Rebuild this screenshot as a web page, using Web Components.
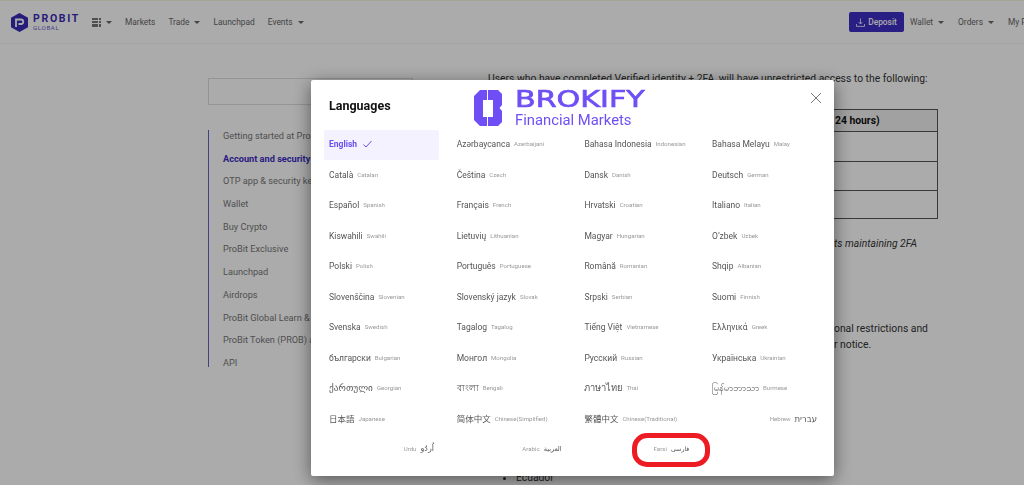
<!DOCTYPE html>
<html>
<head>
<meta charset="utf-8">
<title>Languages</title>
<style>
  html, body { margin: 0; height: 485px; overflow: hidden; background: #fff; }
  body { font-family: Roboto, "Liberation Sans", sans-serif; color: #222; }
</style>
</head>
<body>
<app-nav></app-nav>
<help-page></help-page>
<lang-modal></lang-modal>

<script>
// top bar
class AppNav extends HTMLElement {
  constructor() {
    super();
    this.attachShadow({mode: 'open'});
    this.shadowRoot.innerHTML = `
      <style>
        :host { display: flex; align-items: center; height: 44px; box-sizing: border-box; border-top: 1px solid #f8f8e0; border-bottom: 1px solid #f2f2f2; padding-left: 11px; font-size: 8.4px; color: #666; white-space: nowrap; overflow: hidden; }
        .brand { display: flex; align-items: center; gap: 5px; width: 81px; }
        .word { display: flex; flex-direction: column; padding-top: 1px; }
        .word b { font-size: 10.5px; line-height: 11px; letter-spacing: 1.7px; color: #3a2bb5; font-weight: 700; }
        .word span { font-size: 6.2px; line-height: 8px; letter-spacing: .6px; color: #6a5cc8; }
        .grid { width: 9px; height: 9px; display: grid; grid-template-columns: repeat(3, 2.5px); grid-auto-rows: 2.5px; gap: .75px; }
        .grid i { background: #777; }
        .car { display: inline-block; border: 3px solid transparent; border-top: 3.5px solid #666; border-bottom: 0; margin-left: 5px; vertical-align: 1px; }
        .item { margin-left: 13px; }
        .apps { display: flex; align-items: center; }
        .right { margin-left: auto; display: flex; align-items: center; width: 175px; flex: none; }
        .deposit { width: 55px; height: 20px; background: #3d2ec4; border-radius: 2px; color: #fff; font-weight: 500; display: flex; align-items: center; justify-content: center; gap: 3px; margin-right: 6px; flex: none; }
        .right .item { margin-left: 0; margin-right: 14px; }
      </style>
      <div class="brand">
        <svg width="17" height="19" viewBox="0 0 17 19"><path d="M8.500 0L17 4.700V14.300L8.500 19L0 14.300V4.700Z" fill="#3a2bb5"/><path d="M5 14V6.500H10.500A2.300 2.300 0 0 1 10.500 11H7.500" fill="none" stroke="#fff" stroke-width="1.800"/></svg>
        <div class="word"><b>PROBIT</b><span>GLOBAL</span></div>
      </div>
      <div class="apps"><div class="grid"><i></i><i></i><i></i><i></i><i></i><i></i><i></i><i></i><i></i></div><span class="car"></span></div>
      <span class="item">Markets</span>
      <span class="item">Trade<span class="car"></span></span>
      <span class="item">Launchpad</span>
      <span class="item">Events<span class="car"></span></span>
      <div class="right">
        <div class="deposit">
          <svg width="9" height="9" viewBox="0 0 9 9" fill="none" stroke="#fff" stroke-width=".8"><path d="M4.500 0.500V6M2.500 4L4.500 6L6.500 4M.5 6V8.400H8.500V6"/></svg>
          Deposit
        </div>
        <span class="item">Wallet<span class="car"></span></span>
        <span class="item">Orders<span class="car"></span></span>
        <span class="item">My Page</span>
      </div>`;
  }
}

// what lies behind the dialog
class HelpPage extends HTMLElement {
  constructor() {
    super();
    this.attachShadow({mode: 'open'});
    this.shadowRoot.innerHTML = `
      <style>
        :host { display: flex; padding: 33px 0 0 208px; height: 408px; overflow: hidden; color: #333; }
        .side { width: 280px; flex: none; padding-top: 1px; }
        .search { width: 205px; height: 27px; box-sizing: border-box; border: 1px solid #ddd; }
        ul.menu { list-style: none; margin: 25px 0 0; padding: 0 0 0 14px; border-left: 1px solid #6a5cc8; font-size: 9.2px; height: 237px; color: #777; }
        .menu li { height: 22.7px; line-height: 11px; white-space: nowrap; }
        .menu .on { color: #3d2ec4; font-weight: 700; }
        .main { width: 450px; font-size: 10.35px; flex: none; }
        p { margin: 0; white-space: nowrap; }
        .intro { line-height: 14px; margin-top: -5px; }
        table { border-collapse: collapse; width: 450px; margin-top: 23px; table-layout: fixed; }
        td, th { border: 1px solid #555; padding: 0; font-size: 10.35px; }
        th { height: 21px; background: #f0f0f0; text-align: left; padding-left: 346px; color: #111; }
        .r1 { height: 30px; } .r2 { height: 29px; } .r3 { height: 28px; }
        .note { margin: 18px 0 0 346px; font-style: italic; line-height: 14px; }
        .tail { margin: 70px 0 0 346px; line-height: 16px; }
        .tail + .tail { margin-top: 0; }
        ul.list { margin: 119px 0 0; padding-left: 28px; line-height: 12px; }
      </style>
      <div class="side">
        <div class="search"></div>
        <ul class="menu">
          <li>Getting started at ProBit</li>
          <li class="on">Account and security</li>
          <li>OTP app &amp; security keys</li>
          <li>Wallet</li>
          <li>Buy Crypto</li>
          <li>ProBit Exclusive</li>
          <li>Launchpad</li>
          <li>Airdrops</li>
          <li>ProBit Global Learn &amp; Earn</li>
          <li>ProBit Token (PROB) and more</li>
          <li>API</li>
        </ul>
      </div>
      <div class="main">
        <p class="intro">Users who have completed Verified identity + 2FA, will have unrestricted access to the following:</p>
        <table>
          <tr><th>24 hours)</th></tr>
          <tr class="r1"><td></td></tr>
          <tr class="r2"><td></td></tr>
          <tr class="r3"><td></td></tr>
        </table>
        <p class="note">ts maintaining 2FA</p>
        <p class="tail">onal restrictions and</p>
        <p class="tail">r notice.</p>
        <ul class="list"><li>Ecuador</li></ul>
      </div>`;
  }
}

// one language cell
class LangItem extends HTMLElement {
  constructor() {
    super();
    this.attachShadow({mode: 'open'});
    this.shadowRoot.innerHTML = `
      <style>
        :host { display: flex; align-items: center; gap: 4px; height: 30.5px; box-sizing: border-box; padding: 0 5px 1px; white-space: nowrap; color: #555; font-size: 8.5px; line-height: 12px; }
        #n { height: 12px; }
        small { font-size: 6.1px; color: #999; }
        small:empty { display: none; }
        :host([selected]) { background: #f4f2fe; border-radius: 2px; color: #6a4df0; font-weight: 700; height: 30px; }
        ::slotted(svg) { margin-left: 2px; }
      </style>
      <span id="n"></span><small id="s"></small>
      <slot></slot>`;
  }
  connectedCallback() {
    const n = this.shadowRoot.getElementById('n');
    n.textContent = this.getAttribute('native');
    if (this.hasAttribute('fs')) n.style.fontSize = this.getAttribute('fs') + 'px';
    this.shadowRoot.getElementById('s').textContent = this.getAttribute('name') || '';
  }
}

// native, english name, native size if it differs, rtl
const LANGS = [
  ['English',''],['Azərbaycanca','Azerbaijani'],['Bahasa Indonesia','Indonesian'],['Bahasa Melayu','Malay'],
  ['Català','Catalan'],['Čeština','Czech'],['Dansk','Danish'],['Deutsch','German'],
  ['Español','Spanish'],['Français','French'],['Hrvatski','Croatian'],['Italiano','Italian'],
  ['Kiswahili','Swahili'],['Lietuvių','Lithuanian'],['Magyar','Hungarian'],['O‘zbek','Uzbek'],
  ['Polski','Polish'],['Português','Portuguese'],['Română','Romanian'],['Shqip','Albanian'],
  ['Slovenščina','Slovenian'],['Slovenský jazyk','Slovak'],['Srpski','Serbian'],['Suomi','Finnish'],
  ['Svenska','Swedish'],['Tagalog','Tagalog'],['Tiếng Việt','Vietnamese'],['Ελληνικά','Greek'],
  ['български','Bulgarian'],['Монгол','Mongolia'],['Русский','Russian'],['Українська','Ukrainian'],
  ['ქართული','Georgian',9.3],['বাংলা','Bengali',9.3],['ภาษาไทย','Thai',9.3],['မြန်မာဘာသာ','Burmese',9.3],
  ['日本語','Japanese'],['简体中文','Chinese(Simplified)'],['繁體中文','Chinese(Traditional)'],['עברית','Hebrew',0,1],
  ['اُردُو','Urdu',8,1],['العربية','Arabic',6.6,1],['فارسی','Farsi',6.3,1]
];

class LangModal extends HTMLElement {
  constructor() {
    super();
    this.attachShadow({mode: 'open'});
    this.shadowRoot.innerHTML = `
      <style>
        :host { position: fixed; inset: 0; background: rgba(0,0,0,.33); display: block; font-family: Roboto, "Noto Sans", "DejaVu Sans", "Noto Sans CJK SC", sans-serif; }
        .box { position: absolute; left: 311px; top: 80px; width: 523px; height: 396px; box-sizing: border-box; background: #fff; padding: 16px 13px 0; border-radius: 2px; box-shadow: 0 4px 18px rgba(0,0,0,.5); }
        h2 { margin: 0 0 0 5px; font-size: 12.5px; line-height: 19px; height: 33.5px; font-weight: 700; color: #111; }
        .grid { display: grid; grid-template-columns: repeat(4, 115px); column-gap: 12.7px; }
        .close { position: absolute; right: 12px; top: 12px; width: 12px; height: 12px; }
        .logo { position: absolute; left: 163px; top: 10px; display: flex; gap: 13px; }
        .logo .t { display: flex; flex-direction: column; color: #6f4ff5; }
        .logo b { font-family: "DejaVu Sans", sans-serif; font-size: 23px; line-height: 20px; height: 20px; margin-top: -1px; margin-bottom: 1px; font-weight: 400; -webkit-text-stroke: .7px #6f4ff5; transform-origin: 0 0; transform: scaleX(1.31); white-space: nowrap; }
        .logo span { font-size: 14.8px; line-height: 17px; margin-top: 2px; white-space: nowrap; }
        .ring { position: absolute; left: 321px; top: 353px; width: 78px; height: 34px; box-sizing: border-box; border: 5px solid #ed1c24; border-radius: 15px; }
      </style>
      <div class="box">
        <h2>Languages</h2>
        <div class="logo">
          <svg width="28" height="36" viewBox="0 0 28 36"><path d="M6 0H13V10H9V27H13V36H6L0 30V6ZM14 0H24L28 4V15L25.500 18L28 21V32L24 36H14V27H19V10H14Z" fill="#6f4ff5"/></svg>
          <div class="t"><b>BROKIFY</b><span>Financial Markets</span></div>
        </div>
        <svg class="close" viewBox="0 0 12 12" fill="none" stroke="#777" stroke-width="1"><path d="M1 1L11 11M11 1L1 11"/></svg>
        <div class="grid" id="g"></div>
        <div class="ring"></div>
      </div>`;
    const g = this.shadowRoot.getElementById('g');
    LANGS.forEach((l, i) => {
      const it = document.createElement('lang-item');
      it.setAttribute('native', l[0]);
      it.setAttribute('name', l[1]);
      if (l[2]) it.setAttribute('fs', l[2]);
      if (l[3]) it.setAttribute('dir', 'rtl');
      if (i === 0) {
        it.setAttribute('selected', '');
        it.innerHTML = '<svg width="9" height="8" viewBox="0 0 9 8" fill="none" stroke="#6a4df0" stroke-width="1"><path d="M.5 4.500L3 7L8.500 1"/></svg>';
      }
      g.appendChild(it);
    });
  }
}

customElements.define('app-nav', AppNav);
customElements.define('help-page', HelpPage);
customElements.define('lang-item', LangItem);
customElements.define('lang-modal', LangModal);
</script>
</body>
</html>
